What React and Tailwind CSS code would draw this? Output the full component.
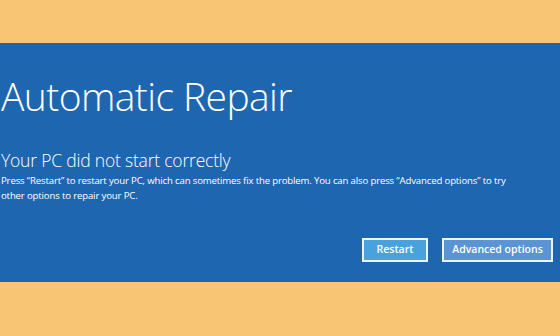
import React from 'react';

const App = () => (
  <div className="w-[560px] h-[336px] bg-[#f7c574] flex flex-col pt-[43px] overflow-hidden" style={{ fontFamily: '"Open Sans", sans-serif' }}>
    <div className="h-[239px] bg-[#1f66b1] text-white flex flex-col pl-[1px]">
      <h1 className="mt-[31px] text-[39px] leading-[44px] font-light tracking-[-0.6px]">Automatic Repair</h1>
      <h2 className="mt-[31px] text-[17.5px] leading-[22px] font-light tracking-[-0.2px]">Your PC did not start correctly</h2>
      <p className="mt-[2px] text-[9.6px] leading-[15px] pr-[32px] tracking-[-0.15px]">
        Press “Restart” to restart your PC, which can sometimes fix the problem. You can also press “Advanced options” to try other options to repair your PC.
      </p>
      <div className="mt-auto mb-[20px] flex justify-end gap-[14px] pr-[7px]">
        <button className="w-[66px] h-[24px] border-2 border-white/90 bg-[#4aa2dc] text-[10.5px] font-semibold text-white">Restart</button>
        <button className="w-[111px] h-[24px] border-2 border-white/90 bg-[#5a94d2] text-[10.5px] font-semibold text-white">Advanced options</button>
      </div>
    </div>
  </div>
);

export default App;
